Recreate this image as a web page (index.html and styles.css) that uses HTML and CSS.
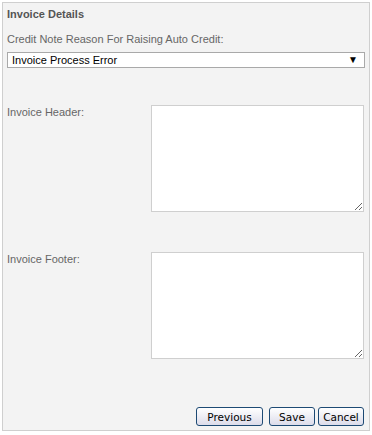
FILE: index.html
```html
<!DOCTYPE html>
<html lang="en">
<head>
    <meta charset="UTF-8">
    <meta name="viewport" content="width=device-width, initial-scale=1.0">
    <title>Invoice Details</title>
    <link rel="stylesheet" href="styles.css">
</head>
<body>
    <div class="panel">
        <div class="panel-title">Invoice Details</div>

        <div class="field-label">Credit Note Reason For Raising Auto Credit:</div>
        <div class="select-wrap">
            <select class="reason-select">
                <option>Invoice Process Error</option>
            </select>
            <span class="select-arrow">&#9660;</span>
        </div>

        <div class="text-row header-row">
            <label class="row-label">Invoice Header:</label>
            <textarea class="row-text"></textarea>
        </div>

        <div class="text-row footer-row">
            <label class="row-label">Invoice Footer:</label>
            <textarea class="row-text"></textarea>
        </div>

        <div class="actions">
            <button class="btn btn-prev">Previous</button>
            <button class="btn btn-save">Save</button>
            <button class="btn btn-cancel">Cancel</button>
        </div>
    </div>
</body>
</html>
```

FILE: styles.css
```css
body {
    margin: 0;
    padding: 0;
    font-family: "Liberation Sans", Arial, sans-serif;
    font-size: 11px;
    background-color: white;
}
.panel {
    box-sizing: border-box;
    width: 368px;
    height: 429px;
    margin: 2px;
    padding: 4px 4px 0 4px;
    background-color: #f3f3f3;
    border: 1px solid #cfcfcf;
    display: flex;
    flex-direction: column;
}
.panel-title {
    font-weight: bold;
    color: #555;
    line-height: 14px;
}
.field-label {
    color: #666;
    line-height: 14px;
    margin-top: 11px;
}
.select-wrap {
    position: relative;
    margin-top: 6px;
    width: 358px;
}
.reason-select {
    appearance: none;
    -webkit-appearance: none;
    box-sizing: border-box;
    width: 100%;
    height: 16px;
    margin: 0;
    padding: 0 0 0 4px;
    border: 1px solid #a9a9a9;
    border-radius: 0;
    background-color: white;
    font-family: "Liberation Sans", Arial, sans-serif;
    font-size: 11px;
    line-height: 14px;
    color: #000;
}
.select-arrow {
    position: absolute;
    right: 7px;
    top: 2px;
    font-size: 10px;
    line-height: 12px;
    color: #000;
    pointer-events: none;
}
.text-row {
    display: grid;
    grid-template-columns: 144px 213px;
}
.header-row {
    margin-top: 37px;
}
.footer-row {
    margin-top: 40px;
}
.row-label {
    color: #666;
    line-height: 14px;
}
.row-text {
    box-sizing: border-box;
    width: 213px;
    height: 107px;
    margin: 0;
    border: 1px solid #cfcfcf;
    background-color: white;
}
.actions {
    display: flex;
    justify-content: flex-end;
    margin-top: auto;
    margin-bottom: 4px;
    padding-right: 1px;
}
.btn {
    box-sizing: border-box;
    height: 19px;
    padding: 0;
    border: 1px solid #1d4a74;
    border-radius: 3px;
    background: linear-gradient(#ffffff, #dcdcea);
    font-family: "DejaVu Sans", Verdana, sans-serif;
    font-size: 10.5px;
    color: #000;
    cursor: pointer;
}
.btn-prev {
    width: 67px;
}
.btn-save {
    width: 46px;
    margin-left: 6px;
}
.btn-cancel {
    width: 46px;
    margin-left: 3px;
}
```
